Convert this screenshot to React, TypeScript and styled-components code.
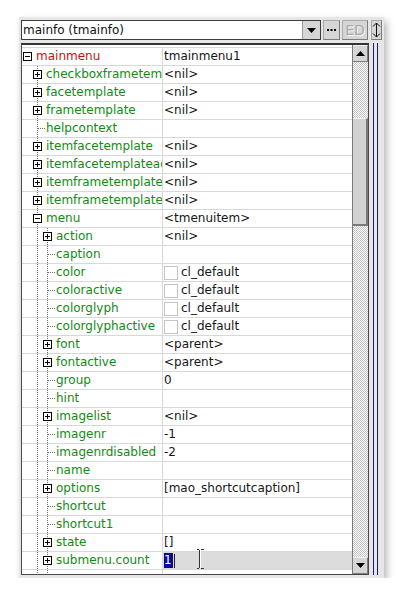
import React from "react"
import styled, { createGlobalStyle } from "styled-components"

const GlobalStyle = createGlobalStyle`
    html, body {
        margin: 0;
        padding: 0;
        background: #ffffff;
        font-family: "DejaVu Sans", "Liberation Sans", sans-serif;
        font-size: 12px;
    }
`

const palette = {
    frame: "#e6e6e6",
    button: "#d6d6d6",
    dark: "#4a4a4a",
    line: "#d8d8d8",
    red: "#c41010",
    green: "#148a14",
    navy: "#1a1a7a",
}

const Page = styled.div`
    padding: 17px 0 0 19px;
`

const Window = styled.div`
    width: 365px;
    box-sizing: border-box;
    padding: 3px 2px 3px 2px;
    background: ${palette.frame};
    box-shadow: 3px 4px 7px rgba(0, 0, 0, 0.28);
    display: flex;
    flex-direction: column;
    gap: 2px;
`

const TopBar = styled.div`
    display: flex;
    flex-direction: row;
    align-items: stretch;
    height: 20px;
`

const Combo = styled.div`
    width: 300px;
    box-sizing: border-box;
    border: 1px solid #3c3c3c;
    background: #ffffff;
    display: flex;
    flex-direction: row;
    align-items: stretch;
`

const ComboText = styled.div`
    flex: 1;
    padding-left: 1px;
    line-height: 18px;
    color: #111;
`

const DropButton = styled.div`
    width: 17px;
    background: ${palette.button};
    border-left: 1px solid #9a9a9a;
    display: flex;
    align-items: center;
    justify-content: center;
`

const ToolButton = styled.div<{ $width: number; $gap: number }>`
    width: ${({ $width }) => $width}px;
    margin-left: ${({ $gap }) => $gap}px;
    box-sizing: border-box;
    background: ${palette.button};
    border: 1px solid #a8a8a8;
    border-right-color: #7c7c7c;
    border-bottom-color: #7c7c7c;
    display: flex;
    align-items: center;
    justify-content: center;
`

const DisabledLabel = styled.span`
    font-size: 14px;
    line-height: 18px;
    color: #a9a9a9;
    text-shadow: 1px 1px 0 #f4f4f4;
`

const Body = styled.div`
    display: flex;
    flex-direction: row;
    margin-top: 1px;
`

const Grid = styled.div`
    width: 348px;
    box-sizing: border-box;
    border: 1px solid ${palette.dark};
    border-top: 2px solid #333;
    background: #ffffff;
    display: flex;
    flex-direction: row;
`

const Rows = styled.div`
    width: 330px;
    height: 529px;
    padding-top: 2px;
    box-sizing: border-box;
    overflow: hidden;
    display: flex;
    flex-direction: column;
`

const Row = styled.div`
    display: flex;
    flex-direction: row;
    flex-shrink: 0;
    height: 17px;
    border-top: 1px solid ${palette.line};
`

const NameCell = styled.div`
    width: 140px;
    flex-shrink: 0;
    border-right: 1px solid ${palette.line};
    display: flex;
    flex-direction: row;
    align-items: stretch;
    overflow: hidden;
    white-space: nowrap;
`

const NameText = styled.span<{ $root?: boolean }>`
    line-height: 17px;
    color: ${({ $root }) => ($root ? palette.red : palette.green)};
`

const ValueCell = styled.div<{ $editing?: boolean }>`
    position: relative;
    flex: 1;
    padding-left: 1px;
    display: flex;
    flex-direction: row;
    align-items: center;
    gap: 3px;
    line-height: 17px;
    white-space: nowrap;
    color: #161616;
    background: ${({ $editing }) => ($editing ? "#dcdcdc" : "transparent")};
`

const Swatch = styled.span`
    width: 14px;
    height: 14px;
    box-sizing: border-box;
    border: 1px solid #c4c4c4;
    background: #ffffff;
`

const Selected = styled.span`
    background: #0a0a90;
    color: #ffffff;
    line-height: 15px;
    padding: 0 1px 0 0;
`

const Caret = styled.span`
    width: 1px;
    height: 14px;
    margin-left: -2px;
    background: #222;
`

const Pointer = styled.svg`
    position: absolute;
    left: 33px;
    top: -3px;
`

const ScrollBar = styled.div`
    width: 16px;
    box-sizing: border-box;
    border-left: 1px solid #7a7a7a;
    display: flex;
    flex-direction: column;
`

const ScrollButton = styled.div`
    height: 17px;
    flex-shrink: 0;
    box-sizing: border-box;
    background: ${palette.button};
    border-right: 1px solid #7c7c7c;
    border-bottom: 1px solid #7c7c7c;
    border-top: 1px solid #f2f2f2;
    display: flex;
    align-items: center;
    justify-content: center;
`

const Track = styled.div`
    flex: 1;
    display: flex;
    flex-direction: column;
    background-color: #ffffff;
    background-image: conic-gradient(#c2c2c2 25%, #ffffff 0 50%, #c2c2c2 0 75%, #ffffff 0);
    background-size: 2px 2px;
`

const Thumb = styled.div<{ $offset: number; $size: number }>`
    margin-top: ${({ $offset }) => $offset}px;
    height: ${({ $size }) => $size}px;
    box-sizing: border-box;
    background: #d2d2d2;
    border-top: 1px solid #f0f0f0;
    border-right: 2px solid #7a7a7a;
    border-bottom: 2px solid #7a7a7a;
`

const Splitter = styled.div`
    display: flex;
    flex-direction: row;
    gap: 3px;
    padding-left: 4px;
`

const SplitLine = styled.div`
    width: 1px;
    background: ${palette.navy};
`

type Kind = "open" | "closed" | "leaf" | "spine"

type Item = {
    name: string
    level: number
    kind: Kind
    value?: string
    swatch?: boolean
    root?: boolean
    editing?: boolean
}

const items: Item[] = [
    { name: "mainmenu", level: 0, kind: "open", value: "tmainmenu1", root: true },
    { name: "checkboxframetemplate", level: 1, kind: "closed", value: "<nil>" },
    { name: "facetemplate", level: 1, kind: "closed", value: "<nil>" },
    { name: "frametemplate", level: 1, kind: "closed", value: "<nil>" },
    { name: "helpcontext", level: 1, kind: "leaf" },
    { name: "itemfacetemplate", level: 1, kind: "closed", value: "<nil>" },
    { name: "itemfacetemplateactive", level: 1, kind: "closed", value: "<nil>" },
    { name: "itemframetemplate", level: 1, kind: "closed", value: "<nil>" },
    { name: "itemframetemplateactive", level: 1, kind: "closed", value: "<nil>" },
    { name: "menu", level: 1, kind: "open", value: "<tmenuitem>" },
    { name: "action", level: 2, kind: "closed", value: "<nil>" },
    { name: "caption", level: 2, kind: "leaf" },
    { name: "color", level: 2, kind: "leaf", value: "cl_default", swatch: true },
    { name: "coloractive", level: 2, kind: "leaf", value: "cl_default", swatch: true },
    { name: "colorglyph", level: 2, kind: "leaf", value: "cl_default", swatch: true },
    { name: "colorglyphactive", level: 2, kind: "leaf", value: "cl_default", swatch: true },
    { name: "font", level: 2, kind: "closed", value: "<parent>" },
    { name: "fontactive", level: 2, kind: "closed", value: "<parent>" },
    { name: "group", level: 2, kind: "leaf", value: "0" },
    { name: "hint", level: 2, kind: "leaf" },
    { name: "imagelist", level: 2, kind: "closed", value: "<nil>" },
    { name: "imagenr", level: 2, kind: "leaf", value: "-1" },
    { name: "imagenrdisabled", level: 2, kind: "leaf", value: "-2" },
    { name: "name", level: 2, kind: "leaf" },
    { name: "options", level: 2, kind: "closed", value: "[mao_shortcutcaption]" },
    { name: "shortcut", level: 2, kind: "leaf" },
    { name: "shortcut1", level: 2, kind: "leaf" },
    { name: "state", level: 2, kind: "closed", value: "[]" },
    { name: "submenu.count", level: 2, kind: "closed", value: "1", editing: true },
    { name: "", level: 2, kind: "spine" },
]

const dots = "#6e6e6e"

// tree connectors and expand boxes for one row
const TreeGlyph = ({ level, kind }: { level: number; kind: Kind }) => {
    const width = 14 + 10 * level
    const c = 5 + 10 * level
    const spines: number[] = []
    for (let k = 1; k <= level; k++) spines.push(5 + 10 * k)
    return (
        <svg width={width} height={17} style={{ flexShrink: 0 }} shapeRendering="crispEdges">
            {spines.map((x) => (
                <line key={x} x1={x + 0.5} y1={0} x2={x + 0.5} y2={17} stroke={dots} strokeDasharray="1 1" />
            ))}
            {kind === "leaf" && (
                <line x1={c + 1} y1={8.5} x2={c + 9} y2={8.5} stroke={dots} strokeDasharray="1 1" />
            )}
            {(kind === "open" || kind === "closed") && (
                <g>
                    <rect x={c - 3.5} y={4.5} width={8} height={8} fill="#fff" stroke="#000" />
                    <line x1={c - 2} y1={8.5} x2={c + 3} y2={8.5} stroke="#000" />
                    {kind === "closed" && <line x1={c + 0.5} y1={6} x2={c + 0.5} y2={11} stroke="#000" />}
                </g>
            )}
        </svg>
    )
}

const Triangle = ({ up }: { up?: boolean }) => (
    <svg width={9} height={5}>
        <polygon points={up ? "0,5 9,5 4.5,0" : "0,0 9,0 4.5,5"} fill="#000" />
    </svg>
)

const IBeam = () => (
    <Pointer width={8} height={20} shapeRendering="crispEdges">
        <path d="M0.5 0.5H3M5 0.5H7.5M3.5 1V19M0.5 19.5H3M5 19.5H7.5" stroke="#fff" strokeWidth={2} fill="none" />
        <path d="M0.5 0.5H3M5 0.5H7.5M3.5 1V19M0.5 19.5H3M5 19.5H7.5" stroke="#333" fill="none" />
    </Pointer>
)

const PropRow = ({ item }: { item: Item }) => (
    <Row>
        <NameCell>
            <TreeGlyph level={item.level} kind={item.kind} />
            <NameText $root={item.root}>{item.name}</NameText>
        </NameCell>
        <ValueCell $editing={item.editing}>
            {item.swatch && <Swatch />}
            {item.editing ? (
                <>
                    <Selected>{item.value}</Selected>
                    <Caret />
                    <IBeam />
                </>
            ) : (
                item.value
            )}
        </ValueCell>
    </Row>
)

export default function App() {
    return (
        <Page>
            <GlobalStyle />
            <Window>
                <TopBar>
                    <Combo>
                        <ComboText>mainfo (tmainfo)</ComboText>
                        <DropButton>
                            <Triangle />
                        </DropButton>
                    </Combo>
                    <ToolButton $width={17} $gap={2}>
                        <svg width={9} height={3}>
                            <rect x={0} y={0} width={2} height={2} fill="#000" />
                            <rect x={3.5} y={0} width={2} height={2} fill="#000" />
                            <rect x={7} y={0} width={2} height={2} fill="#000" />
                        </svg>
                    </ToolButton>
                    <ToolButton $width={26} $gap={2}>
                        <DisabledLabel>ED</DisabledLabel>
                    </ToolButton>
                    <ToolButton $width={11} $gap={3}>
                        <svg width={9} height={18} shapeRendering="crispEdges">
                            <path d="M4.5 2V16M1 5.5L4.5 2L8 5.5M1 12.5L4.5 16L8 12.5" stroke="#111" fill="none" shapeRendering="auto" />
                        </svg>
                    </ToolButton>
                </TopBar>
                <Body>
                    <Grid>
                        <Rows>
                            {items.map((item, i) => (
                                <PropRow key={i} item={item} />
                            ))}
                        </Rows>
                        <ScrollBar>
                            <ScrollButton>
                                <Triangle up />
                            </ScrollButton>
                            <Track>
                                <Thumb $offset={56} $size={108} />
                            </Track>
                            <ScrollButton>
                                <Triangle />
                            </ScrollButton>
                        </ScrollBar>
                    </Grid>
                    <Splitter>
                        <SplitLine />
                        <SplitLine />
                    </Splitter>
                </Body>
            </Window>
        </Page>
    )
}
